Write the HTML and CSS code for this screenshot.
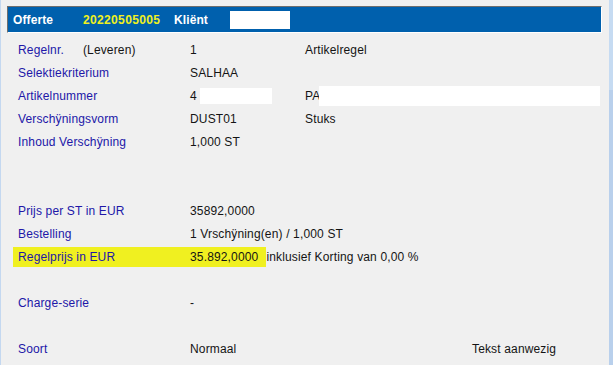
FILE: index.html
```html
<!DOCTYPE html>
<html lang="nl">
<head>
  <meta charset="UTF-8">
  <title>Offerte regel</title>
  <link rel="stylesheet" href="styles.css">
</head>
<body>
  <div class="window">
    <div class="panel">
      <div class="titlebar">
        <span class="t-offerte">Offerte</span>
        <span class="t-number">20220505005</span>
        <span class="t-klient">Kliënt</span>
        <span class="blank-box"></span>
      </div>

      <div class="rows">
        <div class="row">
          <span class="label">Regelnr.<span class="sub">(Leveren)</span></span>
          <span class="value">1</span>
          <span class="extra">Artikelregel</span>
        </div>
        <div class="row">
          <span class="label">Selektiekriterium</span>
          <span class="value">SALHAA</span>
        </div>
        <div class="row">
          <span class="label">Artikelnummer</span>
          <span class="value">4<span class="mask mask-small"></span></span>
          <span class="extra">PA<span class="mask mask-wide"></span></span>
        </div>
        <div class="row">
          <span class="label">Verschÿningsvorm</span>
          <span class="value">DUST01</span>
          <span class="extra">Stuks</span>
        </div>
        <div class="row">
          <span class="label">Inhoud Verschÿning</span>
          <span class="value">1,000 ST</span>
        </div>
        <div class="row"></div>
        <div class="row"></div>
        <div class="row">
          <span class="label">Prijs per ST in EUR</span>
          <span class="value">35892,0000</span>
        </div>
        <div class="row">
          <span class="label">Bestelling</span>
          <span class="value wide">1 Vrschÿning(en) / 1,000 ST</span>
        </div>
        <div class="row">
          <span class="highlight">
            <span class="label">Regelprijs in EUR</span>
            <span class="value auto">35.892,0000</span>
          </span>
          <span class="plain">inklusief Korting van 0,00 %</span>
        </div>
        <div class="row"></div>
        <div class="row">
          <span class="label">Charge-serie</span>
          <span class="value">-</span>
        </div>
        <div class="row"></div>
        <div class="row">
          <span class="label">Soort</span>
          <span class="value">Normaal</span>
          <span class="extra far">Tekst aanwezig</span>
        </div>
      </div>
    </div>
    <div class="scrollbar"><div class="thumb"></div></div>
  </div>
</body>
</html>
```

FILE: styles.css
```css
html, body { margin: 0; padding: 0; }
body { font-family: "Liberation Sans", Arial, sans-serif; font-size: 12px; letter-spacing: 0.15px; background: #f0f0f0; color: #141414; height: 365px; overflow: hidden; }

.window { display: flex; height: 365px; border-left: 1px solid #c4d8f0; }
.panel { flex: 1; padding-top: 6px; }
.scrollbar { width: 4px; background: #b9d0ec; display: flex; flex-direction: column; }
.thumb { height: 90px; background: #c6dbf2; }

.titlebar { margin-left: 6px; width: 593px; height: 25px; background: #0060ad; border: 1px solid; border-color: #6e6e6e #fff #fff #6e6e6e; display: flex; align-items: center; font-weight: bold; color: #fff; letter-spacing: 0.1px; }
.t-offerte { margin-left: 5px; width: 70px; }
.t-number { color: #f0f020; width: 91px; letter-spacing: 0.35px; }
.t-klient { width: 56px; }
.blank-box { width: 60px; height: 18px; background: #fff; }

.rows { padding-top: 5px; padding-left: 17px; }
.row { height: 23px; display: flex; align-items: center; white-space: nowrap; }
.label { width: 172px; color: #2117a8; flex: none; }
.sub { margin-left: 19px; color: #141414; }
.value { width: 115px; flex: none; display: flex; align-items: center; }
.value.wide { width: auto; }
.value.auto { width: auto; }
.extra { display: flex; align-items: center; }
.extra.far { margin-left: 167px; }

.highlight { display: flex; align-items: center; height: 20px; background: #f0f020; margin-left: -5px; padding-left: 5px; padding-right: 8px; }
.plain { margin-left: 0; }

.mask { display: inline-block; background: #fff; }
.mask-small { width: 72px; height: 16px; margin-left: 3px; }
.mask-wide { width: 281px; height: 20px; margin-left: -1px; }
```
